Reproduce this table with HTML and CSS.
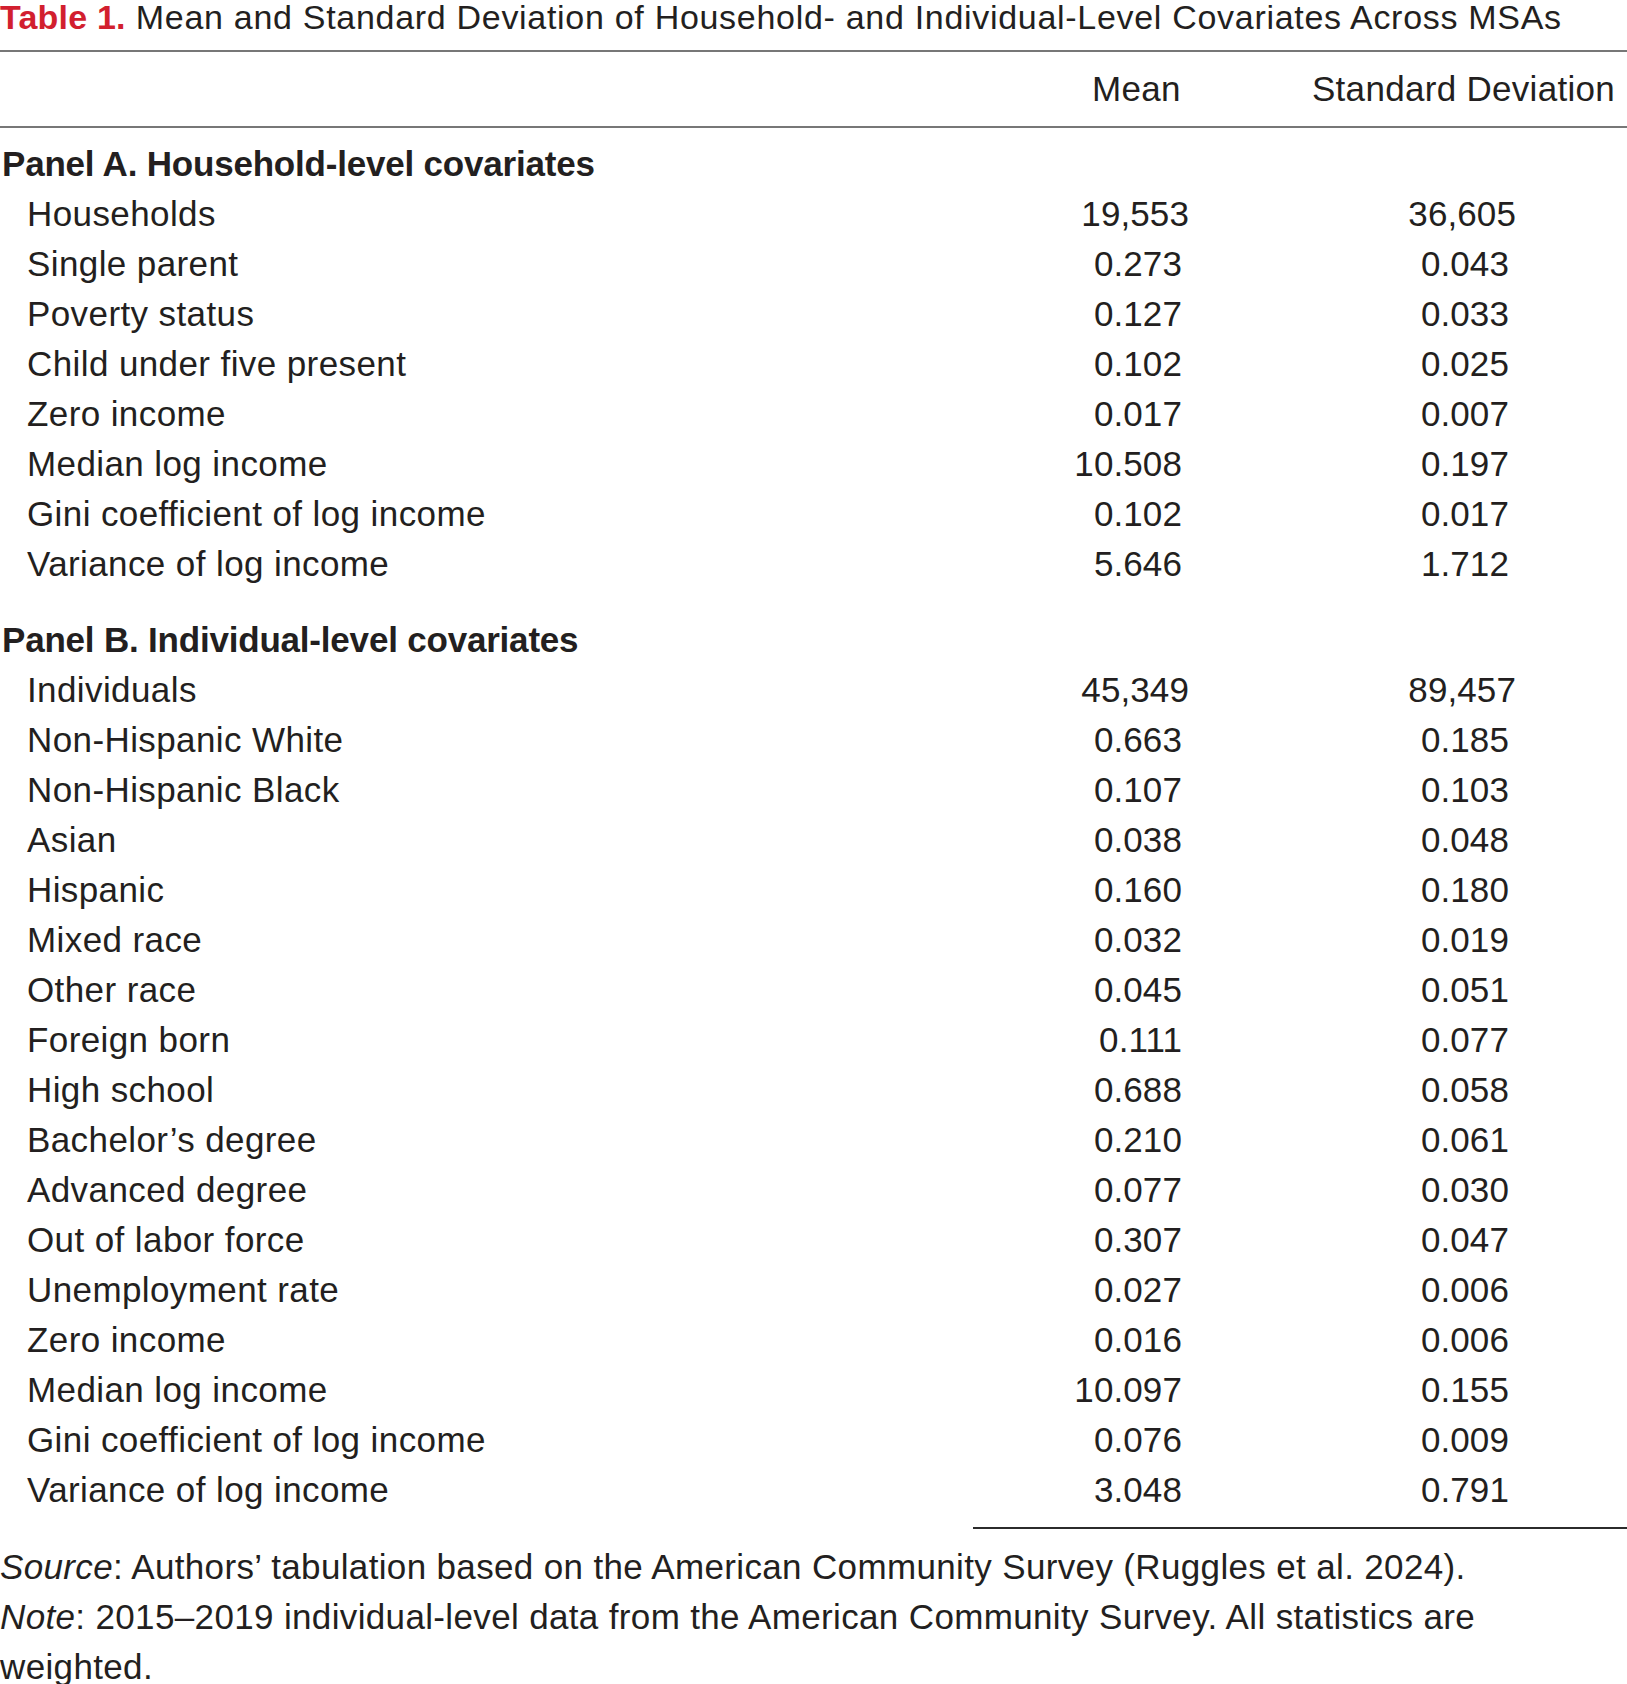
FILE: index.html
```html
<!DOCTYPE html>
<html lang="en">
<head>
<meta charset="utf-8">
<title>Table 1</title>
<link rel="stylesheet" href="styles.css">
</head>
<body>
<div class="figure">
  <h1 class="caption"><span class="caption-label">Table 1.</span> Mean and Standard Deviation of Household- and Individual-Level Covariates Across MSAs</h1>
  <table class="stats">
    <colgroup>
      <col class="col-label">
      <col class="col-num">
      <col class="col-num">
    </colgroup>
    <thead>
      <tr>
        <th class="head-blank"></th>
        <th class="head">Mean</th>
        <th class="head">Standard Deviation</th>
      </tr>
    </thead>
    <tbody>
      <tr class="panel first"><td colspan="3">Panel A. Household-level covariates</td></tr>
      <tr><td class="lbl">Households</td><td class="num int">19,553</td><td class="num int">36,605</td></tr>
      <tr><td class="lbl">Single parent</td><td class="num">0.273</td><td class="num">0.043</td></tr>
      <tr><td class="lbl">Poverty status</td><td class="num">0.127</td><td class="num">0.033</td></tr>
      <tr><td class="lbl">Child under five present</td><td class="num">0.102</td><td class="num">0.025</td></tr>
      <tr><td class="lbl">Zero income</td><td class="num">0.017</td><td class="num">0.007</td></tr>
      <tr><td class="lbl">Median log income</td><td class="num">10.508</td><td class="num">0.197</td></tr>
      <tr><td class="lbl">Gini coefficient of log income</td><td class="num">0.102</td><td class="num">0.017</td></tr>
      <tr><td class="lbl">Variance of log income</td><td class="num">5.646</td><td class="num">1.712</td></tr>
      <tr class="panel"><td colspan="3">Panel B. Individual-level covariates</td></tr>
      <tr><td class="lbl">Individuals</td><td class="num int">45,349</td><td class="num int">89,457</td></tr>
      <tr><td class="lbl">Non-Hispanic White</td><td class="num">0.663</td><td class="num">0.185</td></tr>
      <tr><td class="lbl">Non-Hispanic Black</td><td class="num">0.107</td><td class="num">0.103</td></tr>
      <tr><td class="lbl">Asian</td><td class="num">0.038</td><td class="num">0.048</td></tr>
      <tr><td class="lbl">Hispanic</td><td class="num">0.160</td><td class="num">0.180</td></tr>
      <tr><td class="lbl">Mixed race</td><td class="num">0.032</td><td class="num">0.019</td></tr>
      <tr><td class="lbl">Other race</td><td class="num">0.045</td><td class="num">0.051</td></tr>
      <tr><td class="lbl">Foreign born</td><td class="num">0.111</td><td class="num">0.077</td></tr>
      <tr><td class="lbl">High school</td><td class="num">0.688</td><td class="num">0.058</td></tr>
      <tr><td class="lbl">Bachelor’s degree</td><td class="num">0.210</td><td class="num">0.061</td></tr>
      <tr><td class="lbl">Advanced degree</td><td class="num">0.077</td><td class="num">0.030</td></tr>
      <tr><td class="lbl">Out of labor force</td><td class="num">0.307</td><td class="num">0.047</td></tr>
      <tr><td class="lbl">Unemployment rate</td><td class="num">0.027</td><td class="num">0.006</td></tr>
      <tr><td class="lbl">Zero income</td><td class="num">0.016</td><td class="num">0.006</td></tr>
      <tr><td class="lbl">Median log income</td><td class="num">10.097</td><td class="num">0.155</td></tr>
      <tr><td class="lbl">Gini coefficient of log income</td><td class="num">0.076</td><td class="num">0.009</td></tr>
      <tr class="last"><td class="lbl">Variance of log income</td><td class="num">3.048</td><td class="num">0.791</td></tr>
    </tbody>
  </table>
  <div class="end-rule"></div>
  <div class="notes">
    <p><em>Source</em>: Authors’ tabulation based on the American Community Survey (Ruggles et al. 2024).</p>
    <p><em>Note</em>: 2015–2019 individual-level data from the American Community Survey. All statistics are weighted.</p>
  </div>
</div>
</body>
</html>
```
FILE: styles.css
```css
html, body {
  margin: 0;
  padding: 0;
  background: #ffffff;
}

body {
  font-family: "Liberation Sans", Arial, sans-serif;
  color: #231f20;
}

.figure {
  width: 1627px;
}

.caption {
  margin: 0;
  height: 50px;
  font-size: 34px;
  line-height: 34px;
  font-weight: normal;
  letter-spacing: 0.7px;
  white-space: nowrap;
}

.caption-label {
  color: #d21f2f;
  font-weight: bold;
  letter-spacing: 0.2px;
}

.stats {
  width: 1627px;
  border-collapse: collapse;
  table-layout: fixed;
  font-size: 35px;
}

.col-label { width: 973px; }
.col-num { width: 327px; }

.stats thead tr {
  border-top: 2px solid #777777;
  border-bottom: 2px solid #777777;
}

.stats th {
  font-weight: normal;
  height: 74px;
  padding: 0;
  line-height: 40px;
  vertical-align: middle;
  letter-spacing: 0.3px;
}

.stats .head { text-align: center; }

.stats td {
  padding: 0;
  height: 50px;
  line-height: 50px;
  white-space: nowrap;
  vertical-align: top;
}

.stats .panel td {
  font-weight: bold;
  padding-left: 2px;
  padding-top: 26px;
  letter-spacing: -0.2px;
}

.stats .panel.first td {
  padding-top: 11px;
}

.stats .lbl {
  padding-left: 27px;
  letter-spacing: 0.4px;
}

.stats .num {
  text-align: right;
  padding-right: 118px;
  letter-spacing: 0.1px;
}

.stats .num.int {
  padding-right: 111px;
}

.stats .last td {
  padding-bottom: 12px;
}

.end-rule {
  margin-left: 973px;
  height: 0;
  border-top: 2px solid #2b2b2b;
}

.notes {
  padding-top: 13px;
  font-size: 35px;
  line-height: 50px;
  letter-spacing: 0.35px;
}

.notes p {
  margin: 0;
}

.notes em {
  font-style: italic;
}
```
